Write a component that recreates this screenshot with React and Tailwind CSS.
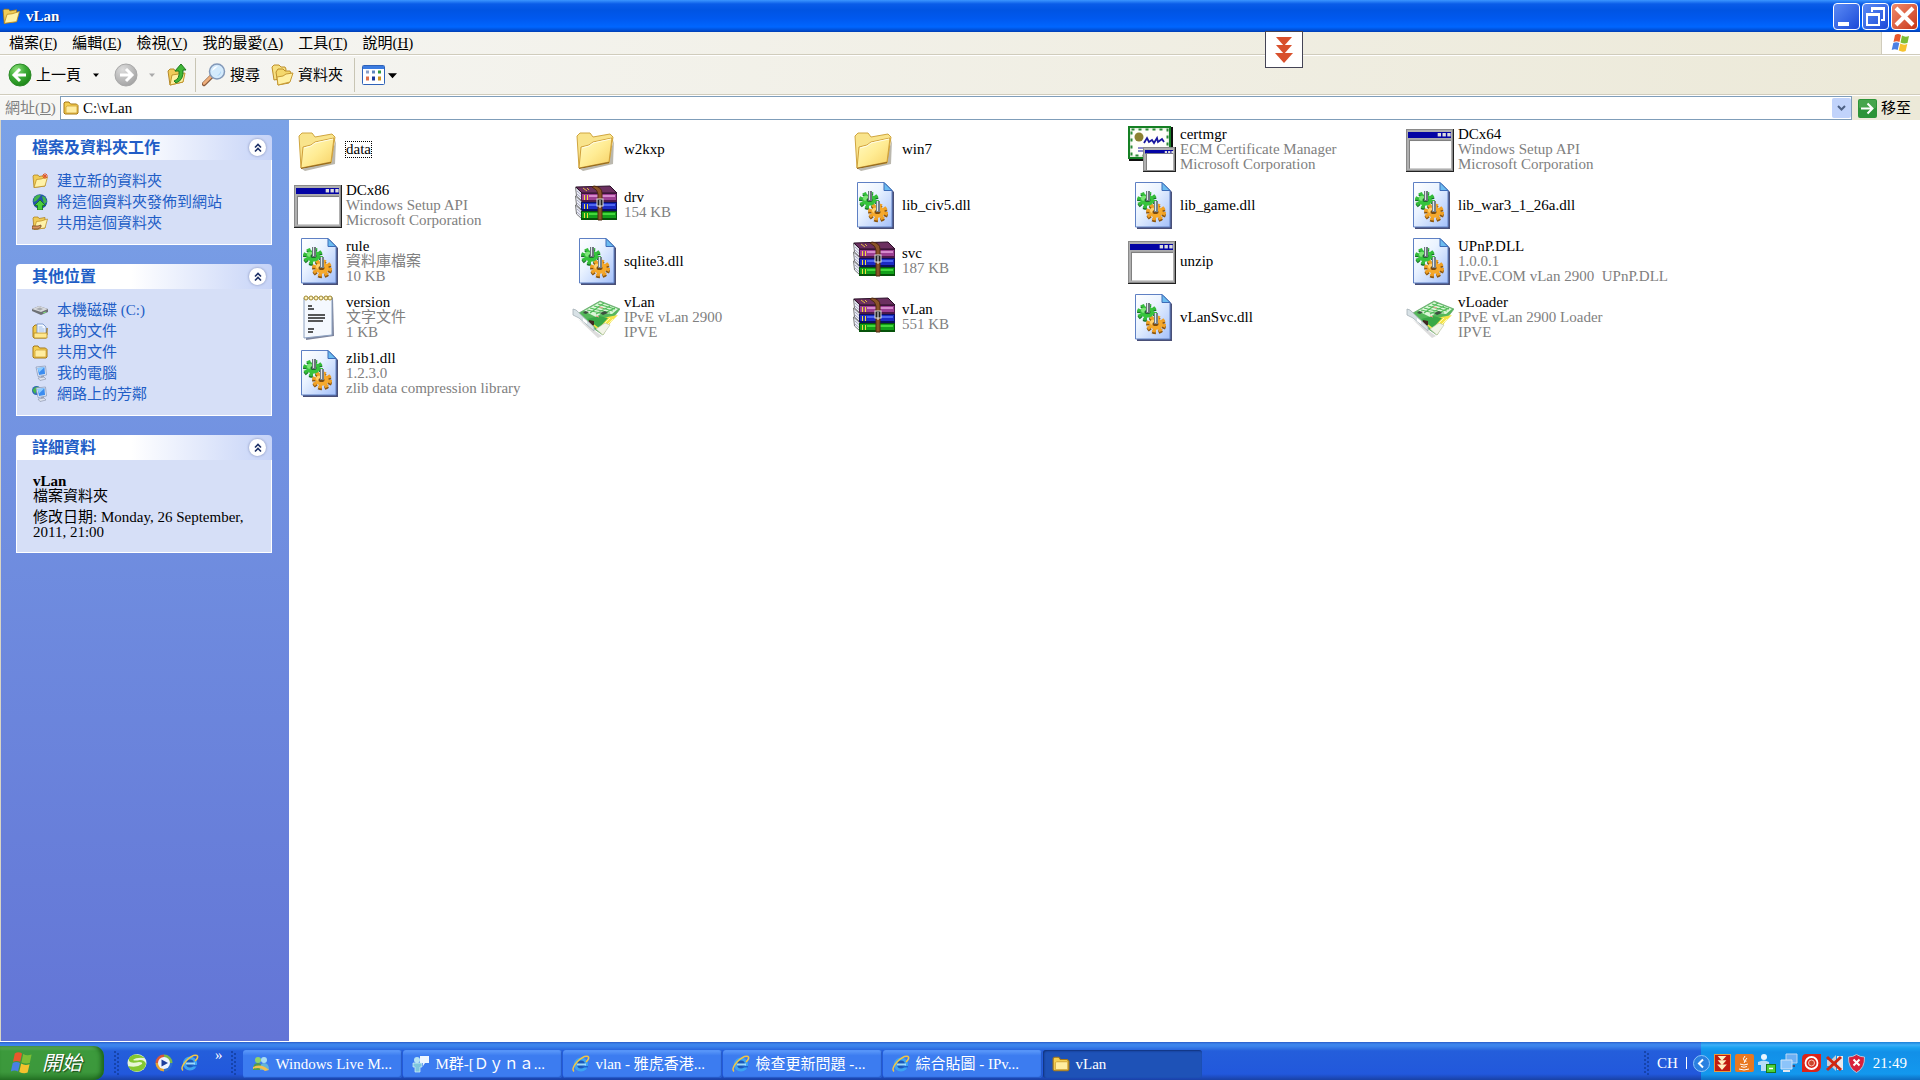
import { useState } from "react";

const FolderLarge = () => (
  <svg width="48" height="48" viewBox="0 0 48 48">
    <defs>
      <linearGradient id="folderFront" x1="0" y1="0" x2="1" y2="1">
        <stop offset="0" stopColor="#fffbc4" />
        <stop offset="0.5" stopColor="#ffec94" />
        <stop offset="1" stopColor="#f6cf62" />
      </linearGradient>
    </defs>
    <path d="M8 44 L35 37 L42 15 L41 39 L11 46 Z" fill="#8d8878" opacity="0.6" />
    <path d="M5 11 L8 8 L18 8 L21 12 L38 9 L41 12 L37 38 L7 43 Z" fill="#f9e48c" stroke="#d0a640" />
    <path d="M7 43 L9 22 L17 20 L21 17 L40 13 L37 37 Z" fill="url(#folderFront)" stroke="#cf9f3a" />
    <path d="M10 23 L17 21 L21 18 L39 14" stroke="#fffde8" fill="none" />
    <path d="M7 43.500 L37 37.500" stroke="#8c6420" />
  </svg>
);

const WindowShape = ({ x, y, w, h }) => (
  <g>
    <rect x={x} y={y} width={w} height={h} fill="#222" />
    <rect x={x} y={y} width={w - 1} height={h - 1} fill="#8a8a8a" />
    <rect x={x + 1} y={y + 1} width={w - 3} height={h - 3} fill="#b0b0b0" />
    <rect x={x + 2} y={y + 3} width={w - 5} height={h * 0.14} fill="#0404a4" />
    <rect x={x + 3} y={y + h * 0.25} width={w - 6} height={h * 0.67} fill="#808080" />
    <rect x={x + 4} y={y + h * 0.28} width={w - 7} height={h * 0.64} fill="#fff" />
    {[0.66, 0.76, 0.86].map((p) => (
      <rect key={p} x={x + w * p} y={y + 4} width={w * 0.07} height={h * 0.08} fill="#ddd" />
    ))}
  </g>
);

const AppWindow = () => (
  <svg width="48" height="48" viewBox="0 0 48 48">
    <WindowShape x={0} y={4} w={48} h={43} />
  </svg>
);

const Certificate = () => (
  <svg width="48" height="48" viewBox="0 0 48 48">
    <rect x="1" y="2" width="44" height="34" fill="#111" />
    <rect x="0" y="1" width="43" height="33" fill="#158024" />
    <rect x="2" y="3" width="39" height="29" fill="#e4eee0" />
    <rect x="3.500" y="4.500" width="36" height="26" fill="#fffffa" stroke="#2c8a38" strokeWidth="2" strokeDasharray="3 4" />
    <circle cx="11" cy="12" r="4.500" fill="#8b8132" />
    <path d="M16 18 l3 -5 l2 4 l3 -2 l2 3 l3 -5 l1 4 l4 -3 l2 3" stroke="#1818a0" strokeWidth="1.800" fill="none" />
    <path d="M10 23 h5 M10 26 h5" stroke="#1818a0" />
    <WindowShape x={15} y={22} w={33} h={25} />
  </svg>
);

const Dll = () => (
  <svg width="48" height="48" viewBox="0 0 48 48">
    <defs>
      <linearGradient id="dllPage" x1="0" y1="0" x2="1" y2="1">
        <stop offset="0" stopColor="#fff" />
        <stop offset="0.4" stopColor="#eaf3ff" />
        <stop offset="1" stopColor="#a4c0fa" />
      </linearGradient>
    </defs>
    <path d="M9 3 H36 L44 11 V48 H9 Z" fill="#4a5078" />
    <path d="M7.500 1.500 H34 L42 9.500 V46 H7.500 Z" fill="url(#dllPage)" stroke="#5e80c4" />
    <path d="M34 1.500 V9.500 H42 Z" fill="#6cbcf0" stroke="#3c6cb8" />
    <g transform="translate(19 19) scale(1 0.850)">
      <circle r="8" cy="1.500" fill="none" stroke="#17702a" strokeWidth="4" strokeDasharray="3.600 2.680" />
      <circle r="8" fill="none" stroke="#34bc3a" strokeWidth="4" strokeDasharray="3.600 2.680" />
      <circle r="6.800" fill="#36c43c" />
      <circle cx="-3" cy="-2" r="3" fill="#7ce676" />
    </g>
    <ellipse cx="19.500" cy="19" rx="3" ry="2" fill="#1c6c2c" />
    <path d="M18 10 h4 v10 h-4 z" fill="#6c767c" />
    <path d="M19.500 10 v9" stroke="#dde4e8" />
    <g transform="translate(28 31) scale(1 0.850)">
      <circle r="8" cy="2" fill="none" stroke="#8e560c" strokeWidth="4" strokeDasharray="3.600 2.680" />
      <circle r="8" fill="none" stroke="#f0a024" strokeWidth="4" strokeDasharray="3.600 2.680" />
      <circle r="6.800" fill="#f5a92c" />
      <circle cx="-3" cy="-2" r="3" fill="#ffd06c" />
    </g>
    <ellipse cx="27.500" cy="31" rx="3" ry="2" fill="#7c4c10" />
    <path d="M26 20 h4 v11 h-4 z" fill="#78828a" />
    <path d="M27.500 20 v10" stroke="#e0e8ee" />
  </svg>
);

const books = [
  { y: 12, cover: "#9c3f92", shine: "#d58acc", dark: "#4e1a4a" },
  { y: 21, cover: "#1c2bc4", shine: "#4e68f0", dark: "#0a1060" },
  { y: 30, cover: "#12a01a", shine: "#44d83c", dark: "#06520a" },
];

const Rar = () => (
  <svg width="48" height="48" viewBox="0 0 48 48">
    {books.map((b) => (
      <g key={b.y}>
        <path d={`M3.500 ${b.y - 6} L10 ${b.y} V${b.y + 8} L4.500 ${b.y + 3} Z`} fill="#eceef8" stroke="#555" strokeWidth="0.800" />
        <path d={`M5 ${b.y - 2} L9.500 ${b.y + 2} M5 ${b.y + 1} L9.500 ${b.y + 5}`} stroke="#a8a8bc" />
        <rect x="9" y={b.y} width="36" height="9" fill={b.dark} />
        <rect x="10" y={b.y + 1} width="34" height="6" fill={b.cover} />
        <rect x="17" y={b.y + 2} width="26" height="2" fill={b.shine} />
        <path d={`M12.500 ${b.y + 2} v5 M15.500 ${b.y + 2} v5`} stroke="#f3dc3c" />
      </g>
    ))}
    <path d="M4 6 L38 5 L45 12 L10 12 Z" fill="#6c3060" stroke="#2a0f28" />
    <path d="M11 7 l4 3 M15 7 l2 2" stroke="#e0c040" />
    <path d="M22 5 Q30 6 30 12 V39 H26 V13 Q26 9 20 6 Z" fill="#8c5428" stroke="#4e2a10" />
    <rect x="25" y="18" width="6" height="7" fill="#222" stroke="#ddd" />
    <path d="M28 19 v8" stroke="#eee" />
  </svg>
);

const Notepad = () => (
  <svg width="48" height="48" viewBox="0 0 48 48">
    <path d="M12 7 L39 5 L40 43 L12 47 Z" fill="#7d849c" />
    <path d="M10 5 L38 4 L38 42 L10 45 Z" fill="#f4f8fe" stroke="#8ba0c0" />
    <path d="M14 13 h4 M14 16 h6 M14 22 h17 M14 25 h17 M14 28 h15 M14 36 h6 M14 39 h5" stroke="#222" strokeWidth="1.300" />
    {[12, 17, 22, 27, 32, 36].map((x) => (
      <circle key={x} cx={x} cy="5" r="2" fill="#fff3bc" stroke="#a08830" />
    ))}
  </svg>
);

const NetCard = () => (
  <svg width="48" height="48" viewBox="0 0 48 48">
    <path d="M6 26 L26 45 L40 38 L30 43 Z" fill="#bbb" opacity="0.5" />
    <path d="M7 20 L28 8 L48 16 L38 29 L31 42 L18 33 Z" fill="#54b85a" stroke="#6aa870" strokeWidth="0.800" />
    <path d="M12 18 L28 9 L46 16 L40 21 L30 20 L24 24 Z" fill="#dcf6d8" />
    <path d="M15 17 L33 21 M18 15 L38 20 M22 13 L41 18 M26 11 L43 16 M18 20 L32 10 M24 21 L38 13 M31 21 L43 15" stroke="#52bc5a" strokeWidth="1.200" />
    <path d="M20 31 L30 25 L46 22 L39 29 L31 42 Z" fill="#f4e448" />
    <path d="M15 26 L27 23 L36 25 L27 35 Z" fill="#38a846" />
    <path d="M24 36 L33 30 L38 32 L31 42 Z" fill="#f2f4e8" stroke="#b8c4a8" strokeWidth="0.600" />
    <path d="M33 30 l5 -5 M36 31 l5 -5" stroke="#fff8b0" />
    <path d="M13 18 l4 1 l-3 2 l-3 -1 z M28 20 l5 -2 l3 2 l-5 2 z" fill="#3c5040" />
    <path d="M17 27 l5 1 v4 l-2 1 l-4 -3 z" fill="#402820" />
    <path d="M27 14 l4 1 M24 23 l3 1" stroke="#f09c90" />
    <path d="M1 16 L4 17 L22 34 L22 38 L7 25 L1 22 Z" fill="#d8e2e6" stroke="#a4b0b6" strokeWidth="0.800" />
    <path d="M11 25 l4 3 v3 l-4 -3 z" fill="#fff" />
  </svg>
);

const FolderSmall = ({ size = 16 }) => (
  <svg width={size} height={size} viewBox="0 0 16 16">
    <path d="M1 3 L2 2 H6 L7.500 4 H13.500 L15 5.500 V13 L14 14 H2 L1 13 Z" fill="#f4cf52" stroke="#a47616" />
    <path d="M3 7 L4 6 H14 L14 13 H3 Z" fill="#ffeda0" stroke="#c89a2c" strokeWidth="0.7" />
  </svg>
);

const FolderOpen = ({ size = 16, badge }) => (
  <svg width={size} height={size} viewBox="0 0 16 16">
    <path d="M1 3 L2 2 H6 L7 3.500 L13 2.500 L13 13 L2 14.500 Z" fill="#f0cc58" stroke="#a9790f" strokeWidth="0.7" />
    <path d="M2 14.500 L4.500 6.500 L9 6 L15.500 4 L13 13 Z" fill="#fff2a8" stroke="#b98a1c" strokeWidth="0.7" />
    {badge === "new" && <path d="M13 0 v6 M10 3 h6 M11 1 l4 4 M15 1 l-4 4" stroke="#e2562a" />}
    {badge === "share" && <path d="M0 11 h6 l3 -1 v2 l-3 2 H0 Z" fill="#d8945e" stroke="#693c1c" strokeWidth="0.7" />}
  </svg>
);

const FolderStack = () => (
  <svg width="23" height="22" viewBox="0 0 23 22">
    <path d="M1 3 L3 1 H8 L10 3 H14 L15 5 L14 14 L3 16 Z" fill="#f6df80" stroke="#bc8e2a" />
    <path d="M5 8 L7 5 H12 L14 7 H19 L20 9 L18 19 L7 21 Z" fill="#f4d86c" stroke="#bc8e2a" />
    <path d="M7 21 L6 13 L12 12 L15 10 L22 9 L19 18 Z" fill="#fff0a2" stroke="#c79a34" />
  </svg>
);

const GlobeUp = () => (
  <svg width="16" height="16" viewBox="0 0 16 16">
    <circle cx="8" cy="7.500" r="7.300" fill="#2355a8" />
    <path d="M2 4 Q5 0 9 1 L7 4 L4 7 L1.500 8 Z M10 2 L13 3 L15 8 L12 10 Z" fill="#43b44c" />
    <path d="M8 6 L13.500 11.500 H10.500 V16 H5.500 V11.500 H2.500 Z" fill="#4bcf3c" stroke="#16701c" strokeWidth="0.8" />
  </svg>
);

const Disk = () => (
  <svg width="16" height="16" viewBox="0 0 16 16">
    <path d="M0 7 L7 4 L16 7 L16 10 L9 13 L0 9 Z" fill="#6e7176" />
    <path d="M0 7 L7 4 L16 7 L9 10 Z" fill="#d7d9dc" />
    <path d="M4 7 L8 5.500 L11 7 L8 8.500 Z" fill="#a6a9ad" />
    <path d="M11 11 l3 -1" stroke="#7fe07a" />
  </svg>
);

const MyDocs = () => (
  <svg width="16" height="16" viewBox="0 0 16 16">
    <path d="M1 4 L3 2 H6 V14 H13 L15 12 V5 L14 15 H2 L1 14 Z" fill="#f0c84a" stroke="#a67a18" />
    <path d="M5 1 H11 L14 4 V12 H5 Z" fill="#f2f8ff" stroke="#6a8cc8" strokeWidth="0.8" />
    <path d="M6.500 4 h4 M6.500 6 h6 M6.500 8 h6" stroke="#86a8e0" strokeWidth="0.8" />
    <path d="M2 10 H15 V15 H2 Z" fill="#ffe88e" stroke="#b88a20" strokeWidth="0.8" />
  </svg>
);

const Computer = ({ globe }) => (
  <svg width="16" height="16" viewBox="0 0 16 16">
    {globe && <circle cx="4.500" cy="4.500" r="4.500" fill="#2e64b8" />}
    {globe && <path d="M0.500 4 Q3 0 7 1 L5 4 L3 8 Z" fill="#46b848" />}
    <path d="M4 2 L13.500 1 L14.500 10 L6 11.500 Z" fill="#e2eaf5" stroke="#8d9cbb" strokeWidth="0.8" />
    <path d="M5.500 3 L12.500 2.300 L13 9 L7 10 Z" fill="#3b8cf0" />
    <path d="M5.500 3 L12.500 2.300 L7 7.500 Z" fill="#8dccff" />
    <path d="M9 11 h3 v2 h-3 z" fill="#9aa5ba" />
    <path d="M6 13 L12 12 L14 14 L8 15.500 Z" fill="#dfe4ee" stroke="#919bb2" strokeWidth="0.7" />
  </svg>
);

const WinFlag = ({ size }) => (
  <svg width={size} height={size} viewBox="0 0 20 20">
    <path d="M4 2 Q7 0 10 2 L8.500 9 Q5.500 7.500 2.500 9 Z" fill="#e8582c" />
    <path d="M11 2.500 Q14 4.500 18 3 L16.500 10 Q13 11 9.500 9.500 Z" fill="#7bbd35" />
    <path d="M2.300 10 Q5.300 8.500 8.300 10 L6.700 17 Q3.700 15.500 0.700 17 Z" fill="#4a80e4" />
    <path d="M9.300 10.500 Q12.500 12.500 16.300 11 L14.700 18 Q11.500 19.500 7.700 17.500 Z" fill="#f5c22e" />
  </svg>
);

const RoundArrow = ({ flip }) => (
  <svg width="24" height="24" viewBox="0 0 24 24">
    <defs>
      <radialGradient id="goBack" cx="0.35" cy="0.25" r="0.8">
        <stop offset="0" stopColor="#8ee07c" />
        <stop offset="0.5" stopColor="#3bab35" />
        <stop offset="1" stopColor="#1b8416" />
      </radialGradient>
      <radialGradient id="goForward" cx="0.35" cy="0.25" r="0.8">
        <stop offset="0" stopColor="#dcdcdc" />
        <stop offset="1" stopColor="#a2a2a2" />
      </radialGradient>
    </defs>
    <circle cx="12" cy="12" r="11" fill={flip ? "url(#goForward)" : "url(#goBack)"} stroke={flip ? "#a8a8a8" : "#2c8a28"} />
    <path
      d={flip ? "M6 12 H17 M12 6 L18 12 L12 18" : "M18 12 H7 M12 6 L6 12 L12 18"}
      stroke="#fff"
      strokeWidth="3"
      fill="none"
    />
  </svg>
);

const UpFolder = () => (
  <svg width="20" height="22" viewBox="0 0 20 22">
    <path d="M1 7 L3 5 H7 L8 7 L15 6 L16 18 L3 21 Z" fill="#efcb58" stroke="#b4882a" />
    <path d="M3 21 L5 11 L18 9 L16 18 Z" fill="#fff0a0" stroke="#c1962e" />
    <path d="M7 17 Q13 15 12 7 H8 L14 0 L19 6 H16 Q17 16 9 19 Z" fill="#40b637" stroke="#1f7a1c" />
  </svg>
);

const SearchGlass = () => (
  <svg width="24" height="24" viewBox="0 0 24 24">
    <path d="M9 14 L2 21" stroke="#8a5a3c" strokeWidth="4.500" strokeLinecap="round" />
    <path d="M9 13.500 L2 20.500" stroke="#f0b07c" strokeWidth="2.500" strokeLinecap="round" />
    <circle cx="15" cy="8.500" r="7.500" fill="#d3eafc" stroke="#8298b8" strokeWidth="1.500" />
    <path d="M10 8 Q11 3.500 16 3 Q13 6 10 8" fill="#fff" />
    <path d="M19 8 Q19 12 15 13 Q18 11 19 8" fill="#98c8f2" />
  </svg>
);

const ViewsIcon = () => (
  <svg width="23" height="20" viewBox="0 0 23 20">
    <rect x="0.500" y="0.500" width="22" height="19" rx="1" fill="#fff" stroke="#2e62b8" />
    <rect x="1" y="1" width="21" height="3" fill="#3c7ce0" />
    <path d="M4 5.500 h3 v3 h-3 z" fill="#8aa0c8" />
    <path d="M10 5.500 h3 v3 h-3 z" fill="#6288c0" />
    <path d="M16 5.500 h3 v3 h-3 z" fill="#2f9a44" />
    <path d="M4 11.500 h3 v4 h-3 z" fill="#e0704c" />
    <path d="M10 11.500 h3 v4 h-3 z" fill="#1c3a98" />
    <path d="M16 11.500 h3 v4 h-3 z" fill="#d09420" />
  </svg>
);

const Caret = ({ fill, size = 6 }) => (
  <svg width={size} height={size} viewBox="0 0 8 8">
    <path d="M0 2 H8 L4 6.500 Z" fill={fill} />
  </svg>
);

const IeLogo = () => (
  <svg width="18" height="18" viewBox="0 0 18 18">
    <circle cx="9" cy="9.500" r="5.500" fill="#1c58b8" stroke="#3ea4f2" strokeWidth="3.200" />
    <path d="M5 9.500 H14" stroke="#9adaff" strokeWidth="2" />
    <path d="M10.500 11 H16 V12.500 H10.500 Z" fill="#1f62d0" />
    <path d="M2 16.500 Q-1 14 5 7 Q12 0 16 1.500 Q18 3 14 7" fill="none" stroke="#f3c744" strokeWidth="1.500" />
  </svg>
);

const Messenger = () => (
  <svg width="18" height="18" viewBox="0 0 18 18">
    <circle cx="6" cy="5" r="3" fill="#8fd36a" />
    <path d="M1 15 Q1 8 6 8 Q10 8 10 15 Z" fill="#4f9c50" />
    <circle cx="12" cy="5" r="3" fill="#a8dcf4" />
    <path d="M8 15 Q8 8 12 8 Q17 8 17 15 Z" fill="#64b4dc" />
    <path d="M1 12 Q9 8 17 15 L13 16 Q8 11 1 14 Z" fill="#f0c050" />
  </svg>
);

const ChatPerson = () => (
  <svg width="18" height="18" viewBox="0 0 18 18">
    <path d="M8 1 H17 V8 H13 L11 11 V8 H8 Z" fill="#eef6ff" />
    <circle cx="5" cy="5" r="3" fill="#b6e4f4" />
    <path d="M1 8 H10 V12 H8 V17 H3 V12 H1 Z" fill="#7ec6de" stroke="#d8f2fa" strokeWidth="0.7" />
  </svg>
);

const SwirlIcon = () => (
  <svg width="20" height="20" viewBox="0 0 20 20">
    <ellipse cx="10" cy="10" rx="9.500" ry="9" fill="#e8f6d8" />
    <path d="M18 5 Q12 0 6 2 Q1 4 2 8 Q4 11 12 9 Q16 9 15 11 Q10 15 1 13 Q4 19 11 18.500 Q18 17 19 11 Q18 7 13 7 Q8 8 6 7 Q9 4 18 5 Z" fill="#84c832" />
  </svg>
);

const PlayerIcon = () => (
  <svg width="18" height="18" viewBox="0 0 18 18">
    <circle cx="9" cy="9" r="8.500" fill="#2e6fd0" />
    <path d="M9 0.500 A8.500 8.500 0 0 0 0.500 9 H9 Z" fill="#d8583a" />
    <path d="M9 0.500 A8.500 8.500 0 0 1 17.500 9 H9 Z" fill="#7cb848" />
    <path d="M0.500 9 A8.500 8.500 0 0 0 9 17.500 V9 Z" fill="#e6a432" />
    <circle cx="9" cy="9" r="6" fill="#eef4ff" />
    <path d="M6.500 5.500 L13 9 L6.500 12.500 Z" fill="#1c3e9c" />
  </svg>
);

const DownTriangles = ({ fill, width, height }) => (
  <svg width={width} height={height} viewBox="0 0 18 26">
    <path d="M1 0 H17 L9 9 Z" fill={fill} />
    <path d="M1 8 H17 L9 17 Z" fill={fill} />
    <path d="M0 16 H18 L9 26 Z" fill={fill} />
  </svg>
);

const DoubleChevron = () => (
  <svg width="8" height="10" viewBox="0 0 8 10">
    <path d="M1 4.500 L4 1.500 L7 4.500 M1 8.500 L4 5.500 L7 8.500" stroke="#1c2f66" strokeWidth="1.600" fill="none" />
  </svg>
);

const menus = [
  ["檔案", "F"],
  ["編輯", "E"],
  ["檢視", "V"],
  ["我的最愛", "A"],
  ["工具", "T"],
  ["說明", "H"],
];

const tasks = [
  { icon: <FolderOpen badge="new" />, text: "建立新的資料夾" },
  { icon: <GlobeUp />, text: "將這個資料夾發佈到網站" },
  { icon: <FolderOpen badge="share" />, text: "共用這個資料夾" },
];

const places = [
  { icon: <Disk />, text: "本機磁碟 (C:)" },
  { icon: <MyDocs />, text: "我的文件" },
  { icon: <FolderSmall />, text: "共用文件" },
  { icon: <Computer />, text: "我的電腦" },
  { icon: <Computer globe />, text: "網路上的芳鄰" },
];

const files = [
  { name: "data", icon: FolderLarge },
  { name: "w2kxp", icon: FolderLarge },
  { name: "win7", icon: FolderLarge },
  { name: "certmgr", icon: Certificate, info: ["ECM Certificate Manager", "Microsoft Corporation"] },
  { name: "DCx64", icon: AppWindow, info: ["Windows Setup API", "Microsoft Corporation"] },
  { name: "DCx86", icon: AppWindow, info: ["Windows Setup API", "Microsoft Corporation"] },
  { name: "drv", icon: Rar, info: ["154 KB"] },
  { name: "lib_civ5.dll", icon: Dll },
  { name: "lib_game.dll", icon: Dll },
  { name: "lib_war3_1_26a.dll", icon: Dll },
  { name: "rule", icon: Dll, info: ["資料庫檔案", "10 KB"] },
  { name: "sqlite3.dll", icon: Dll },
  { name: "svc", icon: Rar, info: ["187 KB"] },
  { name: "unzip", icon: AppWindow },
  { name: "UPnP.DLL", icon: Dll, info: ["1.0.0.1", "IPvE.COM vLan 2900  UPnP.DLL"] },
  { name: "version", icon: Notepad, info: ["文字文件", "1 KB"] },
  { name: "vLan", icon: NetCard, info: ["IPvE vLan 2900", "IPVE"] },
  { name: "vLan", icon: Rar, info: ["551 KB"] },
  { name: "vLanSvc.dll", icon: Dll },
  { name: "vLoader", icon: NetCard, info: ["IPvE vLan 2900 Loader", "IPVE"] },
  { name: "zlib1.dll", icon: Dll, info: ["1.2.3.0", "zlib data compression library"] },
];

const windows = [
  { icon: <Messenger />, title: "Windows Live M..." },
  { icon: <ChatPerson />, title: "M群-[Ｄｙｎａ..." },
  { icon: <IeLogo />, title: "vlan - 雅虎香港..." },
  { icon: <IeLogo />, title: "檢查更新問題 -..." },
  { icon: <IeLogo />, title: "綜合貼圖 - IPv..." },
  { icon: <FolderSmall size={18} />, title: "vLan", active: true },
];

const TitleBar = () => (
  <header className="flex h-8 items-center bg-[linear-gradient(#3c96ff_0,#0a5ce8_4px,#0054e3_10px,#0058ee_18px,#0066ff_27px,#0048c8_31px,#003cb0_32px)] px-[2px]">
    <FolderOpen size={18} />
    <h1 className="ml-[6px] flex-1 text-[15px] leading-[18px] font-bold text-white [text-shadow:1px_1px_1px_#0a2a7c]">vLan</h1>
    <div className="flex gap-[2px]">
      <button aria-label="Minimize" className="h-[27px] w-[27px] rounded-[4px] border border-white bg-linear-to-br from-[#5c8af4] to-[#1c48d8]">
        <svg width="25" height="25" viewBox="0 0 25 25">
          <rect x="4" y="18" width="11" height="4" fill="#fff" />
        </svg>
      </button>
      <button aria-label="Restore" className="h-[27px] w-[27px] rounded-[4px] border border-white bg-linear-to-br from-[#5c8af4] to-[#1c48d8]">
        <svg width="25" height="25" viewBox="0 0 25 25">
          <path d="M9 8 V4 H21 V16 H18" fill="none" stroke="#fff" strokeWidth="2" />
          <path d="M8 4.500 H22" stroke="#fff" strokeWidth="3" />
          <rect x="4" y="10" width="12" height="11" fill="none" stroke="#fff" strokeWidth="2" />
          <path d="M3 10.500 H17" stroke="#fff" strokeWidth="3" />
        </svg>
      </button>
      <button aria-label="Close" className="h-[27px] w-[27px] rounded-[4px] border border-white bg-linear-to-br from-[#f08a6c] to-[#c83410]">
        <svg width="25" height="25" viewBox="0 0 25 25">
          <path d="M4 4 L21 21 M21 4 L4 21" stroke="#fff" strokeWidth="4" />
        </svg>
      </button>
    </div>
  </header>
);

const MenuBar = () => (
  <nav className="flex h-[23px] items-stretch border-b border-[#d0ccbc]">
    <ul className="flex flex-1 items-center gap-[15px] pl-[9px]">
      {menus.map(([label, key]) => (
        <li key={label}>
          <button className="block text-[15px] leading-[18px]">
            {label}(<u className="underline-offset-1">{key}</u>)
          </button>
        </li>
      ))}
    </ul>
    <div className="flex w-[39px] items-center justify-center border-l border-[#d0ccbc] bg-white">
      <WinFlag size={20} />
    </div>
  </nav>
);

const ToolBar = () => (
  <div className="flex h-10 items-center border-t border-b border-t-white border-b-[#d0ccbc] pl-2 text-[15px] leading-[18px]">
    <button className="flex items-center gap-1">
      <RoundArrow />
      上一頁
    </button>
    <button aria-label="Back history" className="ml-3 mr-[15px]">
      <Caret fill="#000" />
    </button>
    <button aria-label="Forward">
      <RoundArrow flip />
    </button>
    <button aria-label="Forward history" className="ml-[11px] mr-3">
      <Caret fill="#aaa" />
    </button>
    <button aria-label="Up">
      <UpFolder />
    </button>
    <span className="ml-2 mr-[6px] h-[34px] w-px bg-[#c8c5b4]" />
    <button className="flex items-center gap-1">
      <SearchGlass />
      搜尋
    </button>
    <button className="ml-[11px] flex items-center gap-1">
      <FolderStack />
      資料夾
    </button>
    <span className="ml-[11px] mr-[7px] h-[34px] w-px bg-[#c8c5b4]" />
    <button aria-label="Views" className="flex items-center gap-[3px]">
      <ViewsIcon />
      <Caret fill="#000" size={9} />
    </button>
  </div>
);

const AddressBar = () => {
  const [path, setPath] = useState("C:\\vLan");

  return (
    <form className="flex h-[25px] items-center border-t border-white text-[15px] leading-[18px]" onSubmit={(e) => e.preventDefault()}>
      <label htmlFor="address" className="w-[60px] pl-[5px] text-[#808080]">
        網址(<u className="underline-offset-1">D</u>)
      </label>
      <div className="flex h-6 flex-1 items-center border border-[#7f9db9] bg-white pl-[2px]">
        <FolderSmall />
        <input
          id="address"
          value={path}
          onChange={(e) => setPath(e.target.value)}
          className="ml-1 h-[18px] flex-1 bg-white outline-none"
        />
        <button type="button" aria-label="Show addresses" className="flex h-5 w-[19px] items-center justify-center rounded-[2px] bg-[#c1d3fb]">
          <svg width="9" height="8" viewBox="0 0 9 8">
            <path d="M1 2 L4.500 5.500 L8 2" stroke="#4d6185" strokeWidth="2" fill="none" />
          </svg>
        </button>
      </div>
      <button className="flex items-center gap-1 pl-[6px] pr-[9px]">
        <svg width="19" height="19" viewBox="0 0 19 19">
          <rect width="19" height="19" rx="2" fill="#2c9438" />
          <rect x="1" y="1" width="17" height="8" rx="1" fill="#58b05c" opacity="0.6" />
          <path d="M3 9.500 H14 M9.500 4.500 L14.500 9.500 L9.500 14.500" stroke="#fff" strokeWidth="2" fill="none" />
        </svg>
        移至
      </button>
    </form>
  );
};

const Panel = ({ title, children }) => {
  const [open, setOpen] = useState(true);

  return (
    <section>
      <div className="flex h-[25px] items-center justify-between rounded-t-[4px] bg-linear-to-r from-white from-45% to-[#c6d3f7] pl-4 pr-[6px]">
        <h2 className="text-base leading-5 font-bold text-[#215dc6]">{title}</h2>
        <button
          aria-label={title}
          onClick={() => setOpen(!open)}
          className="flex h-[17px] w-[17px] items-center justify-center rounded-full bg-white shadow-[0_0_2px_1px_#a8b4d8]"
        >
          <DoubleChevron />
        </button>
      </div>
      {open && <div className="border border-t-0 border-white bg-[#d6dff7]">{children}</div>}
    </section>
  );
};

const LinkList = ({ items }) => (
  <ul className="px-[15px] pt-[10px] pb-[11px]">
    {items.map((item) => (
      <li key={item.text}>
        <a href="#" className="flex h-[21px] items-center gap-[9px] text-[15px] leading-[18px] text-[#215dc6]">
          {item.icon}
          {item.text}
        </a>
      </li>
    ))}
  </ul>
);

const Sidebar = () => (
  <aside className="flex w-[289px] shrink-0 flex-col gap-[19px] border-l border-[#d8d4c4] bg-linear-to-b from-[#7ba2e7] to-[#6375d6] pt-[15px] pr-[17px] pl-[15px]">
    <Panel title="檔案及資料夾工作">
      <LinkList items={tasks} />
    </Panel>
    <Panel title="其他位置">
      <LinkList items={places} />
    </Panel>
    <Panel title="詳細資料">
      <div className="px-4 pt-[14px] pb-3 text-[15px] leading-[15px]">
        <p className="font-bold">vLan</p>
        <p>檔案資料夾</p>
        <p className="mt-[6px]">修改日期: Monday, 26 September, 2011, 21:00</p>
      </div>
    </Panel>
  </aside>
);

const FileItem = ({ file, focused }) => {
  const Icon = file.icon;
  return (
    <li>
      <button className="flex h-14 items-center gap-1 text-left text-[15px] leading-[15px]">
        <Icon />
        <span className="flex flex-col items-start whitespace-pre">
          <span className={focused ? "outline-1 outline-dotted outline-black" : ""}>{file.name}</span>
          {file.info?.map((line) => (
            <span key={line} className="text-[#808080]">
              {line}
            </span>
          ))}
        </span>
      </button>
    </li>
  );
};

const Grip = () => (
  <svg width="5" height="24" viewBox="0 0 5 24">
    <path d="M1 0 V24 M4 2 V24" stroke="#123c9c" strokeWidth="1.500" strokeDasharray="2 2" />
  </svg>
);

const TrayIcons = () => (
  <div className="flex items-center gap-[4px]">
    <span className="flex h-[18px] w-[17px] items-center justify-center border border-[#e89a3c] bg-[#c01c10]">
      <DownTriangles fill="#fff0c0" width={10} height={14} />
    </span>
    <svg width="19" height="18" viewBox="0 0 19 18">
      <rect width="19" height="18" rx="2" fill="#e87820" />
      <path d="M10 2 Q7 5 9.500 7 Q10 8 9 9 M12 4 Q9.500 6 11 8" stroke="#fff" fill="none" />
      <path d="M5 10 Q9 12 13 10 M6 12.500 Q9 14 12 12.500 M4 15 Q9 17 14 15" stroke="#fff" fill="none" />
    </svg>
    <svg width="18" height="20" viewBox="0 0 18 20">
      <circle cx="6" cy="4" r="3" fill="#e8f4ff" />
      <path d="M0 9 Q6 6 11 9 V12 H9 V18 H3 V12 H0 Z" fill="#b8dcf6" />
      <rect x="8.500" y="11.500" width="9" height="8" fill="#4cd038" stroke="#187818" />
      <path d="M11 15.500 H15" stroke="#fff" strokeWidth="1.500" />
    </svg>
    <svg width="18" height="20" viewBox="0 0 18 20">
      <path d="M6 1 H17 V10 H6 Z" fill="#6cb0f4" stroke="#bcd8f4" />
      <path d="M9 12 H15 V14 H9 Z" fill="#3c5080" />
      <path d="M1 7 H12 V16 H1 Z" fill="#8cc4fa" stroke="#d0e4f8" />
      <path d="M3 18 H10" stroke="#e4e8f0" strokeWidth="2" />
    </svg>
    <svg width="19" height="18" viewBox="0 0 19 18">
      <path d="M4 0 H19 V13 Q18 18 13 18 H0 V5 Q0 0 4 0 Z" fill="#dc2418" />
      <circle cx="9.500" cy="9" r="6" fill="none" stroke="#fff" strokeWidth="1.800" />
      <circle cx="9.500" cy="9" r="3" fill="#c8462c" stroke="#ffc8b8" />
    </svg>
    <svg width="19" height="18" viewBox="0 0 19 18">
      <path d="M2 6 H6 L11 1 V17 L6 12 H2 Z" fill="#c9cdd6" />
      <path d="M12 2 H18 V16 H12 Z" fill="#e8eaee" />
      <path d="M2 3 L16 16 M16 3 L2 16" stroke="#d02810" strokeWidth="3" />
    </svg>
    <svg width="17" height="19" viewBox="0 0 17 19">
      <path d="M8.500 0.500 Q12 3 16.500 3 Q17 14 8.500 18.500 Q0 14 0.500 3 Q5 3 8.500 0.500 Z" fill="#d8203c" stroke="#b8c4d8" />
      <path d="M5.500 5.500 L11.500 11.500 M11.500 5.500 L5.500 11.500" stroke="#fff" strokeWidth="2" />
    </svg>
  </div>
);

const Taskbar = () => (
  <footer className="flex h-[38px] items-stretch bg-[linear-gradient(#2a5cc8_0,#3c84ec_2px,#3c84ec_4px,#245edb_9px,#2258dc_32px,#1941a5_38px)] text-[15px] leading-[18px] text-white">
    <button className="mt-1 flex w-[104px] items-center gap-2 rounded-r-[10px] bg-[linear-gradient(#6cb868_0,#3c9a3c_5px,#3c983c_26px,#287828_34px)] pl-[10px] text-xl leading-6 italic shadow-[inset_-3px_0_4px_#1c641c] [text-shadow:1px_1px_1px_#184818]">
      <WinFlag size={24} />
      開始
    </button>
    <div className="flex items-center gap-2 pt-1 pl-[10px]">
      <Grip />
      <button aria-label="Browser">
        <SwirlIcon />
      </button>
      <button aria-label="Media player">
        <PlayerIcon />
      </button>
      <button aria-label="Internet Explorer">
        <IeLogo />
      </button>
      <button className="self-start pl-2 leading-[18px]">»</button>
      <Grip />
    </div>
    <ul className="flex flex-1 gap-px pt-2 pb-[2px] pl-[7px]">
      {windows.map((win) => (
        <li key={win.title} className="w-[159px]">
          <button
            className={
              win.active
                ? "flex h-full w-full items-center gap-[6px] rounded-[3px] bg-[#1e52b7] pl-[9px] whitespace-pre shadow-[inset_1px_1px_2px_#103078]"
                : "flex h-full w-full items-center gap-[6px] rounded-[3px] bg-linear-to-b from-[#5694f8] from-5% to-[#3c7cf0] to-20% pl-[9px] whitespace-pre shadow-[inset_-1px_-1px_1px_#2458c4]"
            }
          >
            {win.icon}
            {win.title}
          </button>
        </li>
      ))}
    </ul>
    <div className="flex items-center gap-2 pt-1 pr-[14px]">
      <Grip />
      <button>CH</button>
      <span className="h-3 w-px bg-white" />
    </div>
    <div className="flex items-center bg-[linear-gradient(#1c80d8_0,#3cb0f8_3px,#18a0f0_6px,#1290e8_10px,#1398ee_32px,#0d6cc0_38px)] pt-1 pr-[13px]">
      <button aria-label="Show hidden icons" className="-ml-2 mr-1">
        <svg width="17" height="17" viewBox="0 0 17 17">
          <circle cx="8.500" cy="8.500" r="8" fill="#2a80e0" stroke="#8cc4f8" />
          <path d="M10 4.500 L6 8.500 L10 12.500" stroke="#fff" strokeWidth="2" fill="none" />
        </svg>
      </button>
      <TrayIcons />
      <time className="ml-2">21:49</time>
    </div>
  </footer>
);

const App = () => {
  return (
    <div className="relative flex h-screen flex-col bg-white font-['Liberation_Serif','Noto_Sans_CJK_TC',serif] text-black">
      <TitleBar />
      <div className="bg-linear-to-r from-[#f6f6f4] to-[#ece9d8]">
        <MenuBar />
        <ToolBar />
        <AddressBar />
      </div>

      <div className="flex min-h-0 flex-1 pb-px">
        <Sidebar />
        <main className="flex-1 overflow-auto pt-px pl-[5px]">
          <ul className="grid grid-cols-[repeat(auto-fill,278px)]">
            {files.map((file, i) => (
              <FileItem key={i} file={file} focused={i === 0} />
            ))}
          </ul>
        </main>
      </div>

      <Taskbar />

      {/* floating download drop target */}
      <div className="absolute top-[31px] right-[617px] flex h-[37px] w-[38px] items-center justify-center border border-[#445] bg-white">
        <DownTriangles fill="#d8502c" width={18} height={26} />
      </div>
    </div>
  );
};

export default App;
